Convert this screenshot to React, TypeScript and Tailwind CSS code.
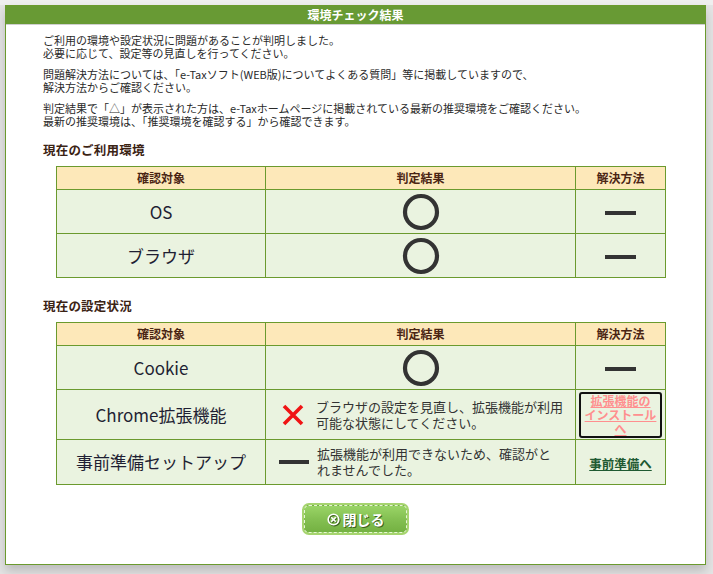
const jp = { fontFamily: '"Noto Sans CJK JP", "Noto Sans", sans-serif' };

function Circle() {
  return (
    <svg width="38" height="38" viewBox="0 0 38 38">
      <circle cx="19" cy="19" r="16" fill="none" stroke="#333" strokeWidth="4.2" />
    </svg>
  );
}

function Dash({ w = 31 }: { w?: number }) {
  return <div className="h-[4px] bg-[#333]" style={{ width: w }} />;
}

function Cross() {
  return (
    <svg width="22" height="22" viewBox="0 0 22 22">
      <path d="M2 2 L20 20 M20 2 L2 20" stroke="#f01414" strokeWidth="3.6" strokeLinecap="butt" />
    </svg>
  );
}

function HeadRow() {
  return (
    <tr className="h-[23px] bg-[#fde8b9] text-[12px] font-bold text-[#4a2514]">
      <th className="w-[209px] border border-[#6b9a2e] font-bold">確認対象</th>
      <th className="w-[310px] border border-[#6b9a2e] font-bold">判定結果</th>
      <th className="border border-[#6b9a2e] font-bold">解決方法</th>
    </tr>
  );
}

function Label({ children }: { children: React.ReactNode }) {
  return <td className="border border-[#6b9a2e] text-center text-[17px] text-[#1f1f33]">{children}</td>;
}

function OkRow({ label, h = 44 }: { label: string; h?: number }) {
  return (
    <tr className="bg-[#eaf3e0]" style={{ height: h }}>
      <Label>{label}</Label>
      <td className="border border-[#6b9a2e]">
        <div className="flex justify-center">
          <Circle />
        </div>
      </td>
      <td className="border border-[#6b9a2e]">
        <div className="flex justify-center pt-[3px]">
          <Dash />
        </div>
      </td>
    </tr>
  );
}

export default function App() {
  return (
    <div className="w-[713px] h-[574px] bg-[#e4e4e4] overflow-hidden" style={jp}>
      <div className="h-[5px] bg-[#efefef]" />
      <div className="ml-[5px] w-[701px] h-[560px] bg-white border border-[#6b9a2e] shadow-[0_6px_10px_rgba(0,0,0,0.18)] flex flex-col">
        <div className="h-[19px] bg-[#689a34] border-b border-[#cfcfcf] flex items-center justify-center text-white text-[12px] font-bold">
          環境チェック結果
        </div>

        <div className="pl-[37px] pt-[9px] text-[11px] leading-[13px] text-[#2a2a2a]">
          <p className="mb-[8px]">
            ご利用の環境や設定状況に問題があることが判明しました。
            <br />
            必要に応じて、設定等の見直しを行ってください。
          </p>
          <p className="mb-[8px]">
            問題解決方法については、「e-Taxソフト(WEB版)についてよくある質問」等に掲載していますので、
            <br />
            解決方法からご確認ください。
          </p>
          <p>
            判定結果で「△」が表示された方は、e-Taxホームページに掲載されている最新の推奨環境をご確認ください。
            <br />
            最新の推奨環境は、「推奨環境を確認する」から確認できます。
          </p>
        </div>

        <h3 className="pl-[37px] mt-[14px] text-[12.5px] leading-[16px] font-bold text-[#3b2314] tracking-[0.2px]">
          現在のご利用環境
        </h3>
        <table className="ml-[50px] mt-[8px] w-[610px] border-collapse border border-[#6b9a2e]">
          <tbody>
            <HeadRow />
            <OkRow label="OS" />
            <OkRow label="ブラウザ" />
          </tbody>
        </table>

        <h3 className="pl-[37px] mt-[20px] text-[12.5px] leading-[16px] font-bold text-[#3b2314] tracking-[0.2px]">
          現在の設定状況
        </h3>
        <table className="ml-[50px] mt-[8px] w-[610px] border-collapse border border-[#6b9a2e]">
          <tbody>
            <HeadRow />
            <OkRow label="Cookie" />
            <tr className="h-[50px] bg-[#eaf3e0]">
              <Label>Chrome拡張機能</Label>
              <td className="border border-[#6b9a2e]">
                <div className="flex items-center gap-[12px] pl-[16px]">
                  <Cross />
                  <p className="text-[13px] leading-[16px] text-[#333]">
                    ブラウザの設定を見直し、拡張機能が利用
                    <br />
                    可能な状態にしてください。
                  </p>
                </div>
              </td>
              <td className="border border-[#6b9a2e] px-[3px]">
                <div className="h-[46px] border-2 border-[#111] rounded-[3px] flex items-center justify-center text-center">
                  <a className="text-[12px] leading-[14px] font-bold text-[#ff8f8f] underline">
                    拡張機能の
                    <br />
                    インストール
                    <br />へ
                  </a>
                </div>
              </td>
            </tr>
            <tr className="h-[45px] bg-[#eaf3e0]">
              <Label>事前準備セットアップ</Label>
              <td className="border border-[#6b9a2e]">
                <div className="flex items-center gap-[8px] pl-[13px]">
                  <Dash w={30} />
                  <p className="text-[13px] leading-[16px] text-[#333]">
                    拡張機能が利用できないため、確認がと
                    <br />
                    れませんでした。
                  </p>
                </div>
              </td>
              <td className="border border-[#6b9a2e] text-center">
                <a className="text-[12.5px] font-bold text-[#1f5a32] underline">事前準備へ</a>
              </td>
            </tr>
          </tbody>
        </table>

        <div className="flex justify-center mt-[18px]">
          <div className="w-[107px] h-[32px] rounded-[7px] bg-[#a6d46f] p-[2px]">
            <div className="h-full rounded-[5px] border border-dashed border-[#e8f5d8] bg-gradient-to-b from-[#9ad466] via-[#84c052] to-[#74b142] flex items-center justify-center gap-[3px] text-white text-[14px] font-bold [text-shadow:1px_1px_0_#3e6220]">
              <svg width="13" height="13" viewBox="0 0 13 13" className="drop-shadow-[1px_1px_0_#3e6220]">
                <circle cx="6.5" cy="6.5" r="5.3" fill="none" stroke="white" strokeWidth="1.6" />
                <path d="M4.2 4.2 L8.8 8.8 M8.8 4.2 L4.2 8.8" stroke="white" strokeWidth="1.6" />
              </svg>
              閉じる
            </div>
          </div>
        </div>
      </div>
    </div>
  );
}
